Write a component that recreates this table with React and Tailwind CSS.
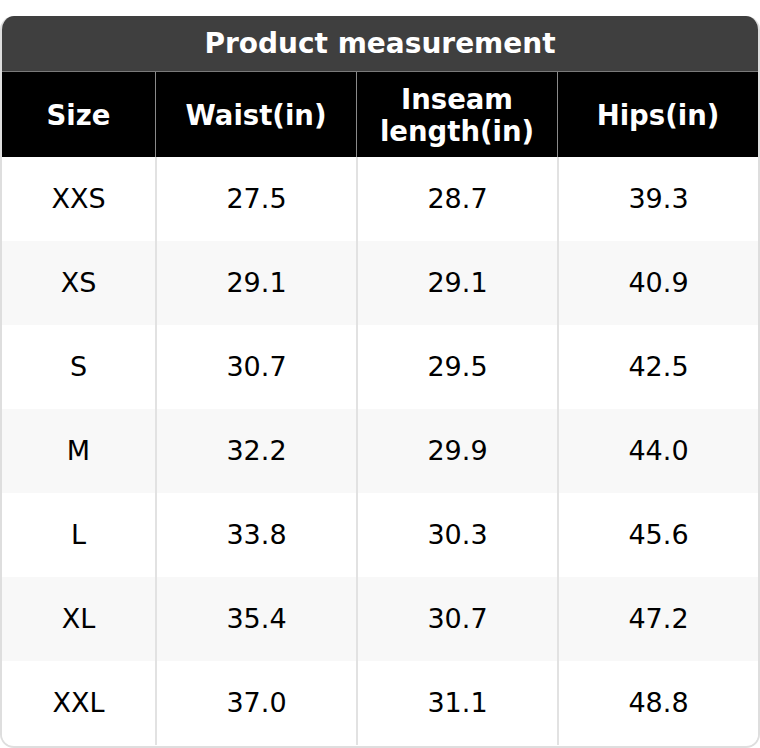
import React from "react";

const rows = [
    ["XXS", "27.5", "28.7", "39.3"],
    ["XS", "29.1", "29.1", "40.9"],
    ["S", "30.7", "29.5", "42.5"],
    ["M", "32.2", "29.9", "44.0"],
    ["L", "33.8", "30.3", "45.6"],
    ["XL", "35.4", "30.7", "47.2"],
    ["XXL", "37.0", "31.1", "48.8"],
];

const cols = "grid grid-cols-[153px_201px_201px_1fr]";

export default function App() {
    return (
        <div className="w-[760px] h-[748px] bg-white pt-[16px] font-['DejaVu_Sans',sans-serif]">
            <div className="rounded-[14px] overflow-hidden border-x-2 border-b-2 border-[#dedede] h-[732px] flex flex-col">
                <div className="h-[56px] bg-[#3f3f3f] text-white font-bold text-[28px] flex items-center justify-center border-b border-[#7a7a7a]">
                    Product measurement
                </div>
                <div className={`${cols} h-[85px] bg-black text-white font-bold text-[27.5px] leading-[32px]`}>
                    <div className="flex items-center justify-center text-center">Size</div>
                    <div className="flex items-center justify-center text-center border-l border-[#8a8a8a]">Waist(in)</div>
                    <div className="flex items-center justify-center text-center border-l border-[#8a8a8a]">
                        Inseam
                        <br />
                        length(in)
                    </div>
                    <div className="flex items-center justify-center text-center border-l border-[#8a8a8a]">Hips(in)</div>
                </div>
                {rows.map((r, i) => (
                    <div key={r[0]} className={`${cols} h-[84px] text-[27px] text-black ${i % 2 === 1 ? "bg-[#f8f8f8]" : "bg-white"}`}>
                        {r.map((v, j) => (
                            <div key={j} className={`flex items-center justify-center ${j > 0 ? "border-l-2 border-[#e2e2e2]" : ""}`}>
                                {v}
                            </div>
                        ))}
                    </div>
                ))}
            </div>
        </div>
    );
}
